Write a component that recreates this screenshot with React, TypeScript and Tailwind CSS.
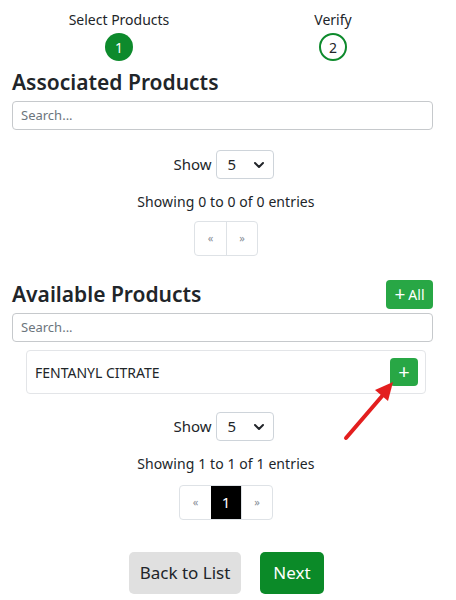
import { ChevronDown } from 'lucide-react';

function ShowSelect() {
  return (
    <div className="flex items-center justify-center gap-1 pl-[2px]">
      <span className="text-[15px] text-[#212529]">Show</span>
      <div className="flex h-[29px] w-[58px] items-center justify-between rounded-[4px] border border-[#ced4da] bg-white pl-[11px] pr-[6px] text-[15px] text-[#212529]">
        <span>5</span>
        <ChevronDown className="h-4 w-4" strokeWidth={3} />
      </div>
    </div>
  );
}

function Pager({ pages }: { pages: number[] }) {
  return (
    <div className="flex justify-center pl-[7px]">
      <div className="flex overflow-hidden rounded-[4px] border border-[#dee2e6]">
        <span className="flex h-[33px] w-[31px] items-center justify-center text-[11px] text-[#8a9099]">«</span>
        {pages.map((p) => (
          <span key={p} className="flex h-[33px] w-[30px] items-center justify-center bg-black text-[15px] text-white">
            {p}
          </span>
        ))}
        <span className="flex h-[33px] w-[31px] items-center justify-center border-l border-[#dee2e6] text-[11px] text-[#8a9099]">»</span>
      </div>
    </div>
  );
}

function SearchBox() {
  return (
    <div className="flex h-[29px] w-full items-center rounded-[4px] border border-[#c6c9cc] bg-white px-2 text-[13px] text-[#6c757d]">
      Search...
    </div>
  );
}

export default function App() {
  return (
    <div className="relative h-[600px] w-[456px] overflow-hidden bg-white font-['Noto_Sans',sans-serif] text-[#212529]">
      {/* stepper */}
      <div className="ml-3 grid w-[428px] grid-cols-2 pt-[8px]">
        <div className="flex flex-col items-center">
          <span className="text-[14px] leading-[24px]">Select Products</span>
          <span className="mt-[1px] flex h-[28px] w-[28px] items-center justify-center rounded-full bg-[#0d8a2c] text-[14px] text-white">1</span>
        </div>
        <div className="flex flex-col items-center">
          <span className="text-[14px] leading-[24px]">Verify</span>
          <span className="mt-[1px] flex h-[28px] w-[28px] items-center justify-center rounded-full border-2 border-[#0d8a2c] text-[14px]">2</span>
        </div>
      </div>

      <div className="ml-3 w-[421px]">
        <h4 className="mt-[6px] text-[21px] font-semibold leading-[30px]">Associated Products</h4>
        <div className="mt-[4px]">
          <SearchBox />
        </div>
        <div className="mt-[20px]">
          <ShowSelect />
        </div>
        <p className="mt-[12px] pl-[7px] text-center text-[14px] leading-[22px] tracking-[0.1px]">Showing 0 to 0 of 0 entries</p>
        <div className="mt-[8px]">
          <Pager pages={[]} />
        </div>

        <div className="mt-[23px] flex items-center justify-between">
          <h4 className="text-[21px] font-semibold leading-[30px]">Available Products</h4>
          <button className="flex h-[29px] w-[47px] items-center justify-center gap-[3px] rounded-[4px] bg-[#28a745] text-[14px] text-white">
            <span className="text-[19px] leading-none">+</span>
            <span>All</span>
          </button>
        </div>
        <div className="mt-[4px]">
          <SearchBox />
        </div>

        <div className="ml-[14px] mr-[7px] mt-[8px] flex h-[44px] items-center justify-between rounded-[4px] border border-[#e3e5e8] pl-[8px] pr-[7px]">
          <span className="text-[14px]">FENTANYL CITRATE</span>
          <button className="flex h-[28px] w-[28px] items-center justify-center rounded-[4px] bg-[#28a745] text-[20px] leading-none text-white">+</button>
        </div>

        <div className="mt-[18px]">
          <ShowSelect />
        </div>
        <p className="mt-[12px] pl-[7px] text-center text-[14px] leading-[22px] tracking-[0.1px]">Showing 1 to 1 of 1 entries</p>
        <div className="mt-[10px]">
          <Pager pages={[1]} />
        </div>

        <div className="mt-[32px] flex justify-center gap-[19px] pl-[8px]">
          <button className="h-[42px] w-[112px] rounded-[5px] bg-[#e0e0e0] text-[17px] text-[#212529]">Back to List</button>
          <button className="h-[42px] w-[64px] rounded-[5px] bg-[#0b8a28] text-[17px] text-white">Next</button>
        </div>
      </div>

      {/* annotation arrow */}
      <svg className="pointer-events-none absolute left-0 top-0" width="456" height="600">
        <line x1="346" y1="438" x2="383" y2="395" stroke="#e31e1e" strokeWidth="4" strokeLinecap="round" />
        <polygon points="393,382 375,390 388,401" fill="#e31e1e" />
      </svg>
    </div>
  );
}
